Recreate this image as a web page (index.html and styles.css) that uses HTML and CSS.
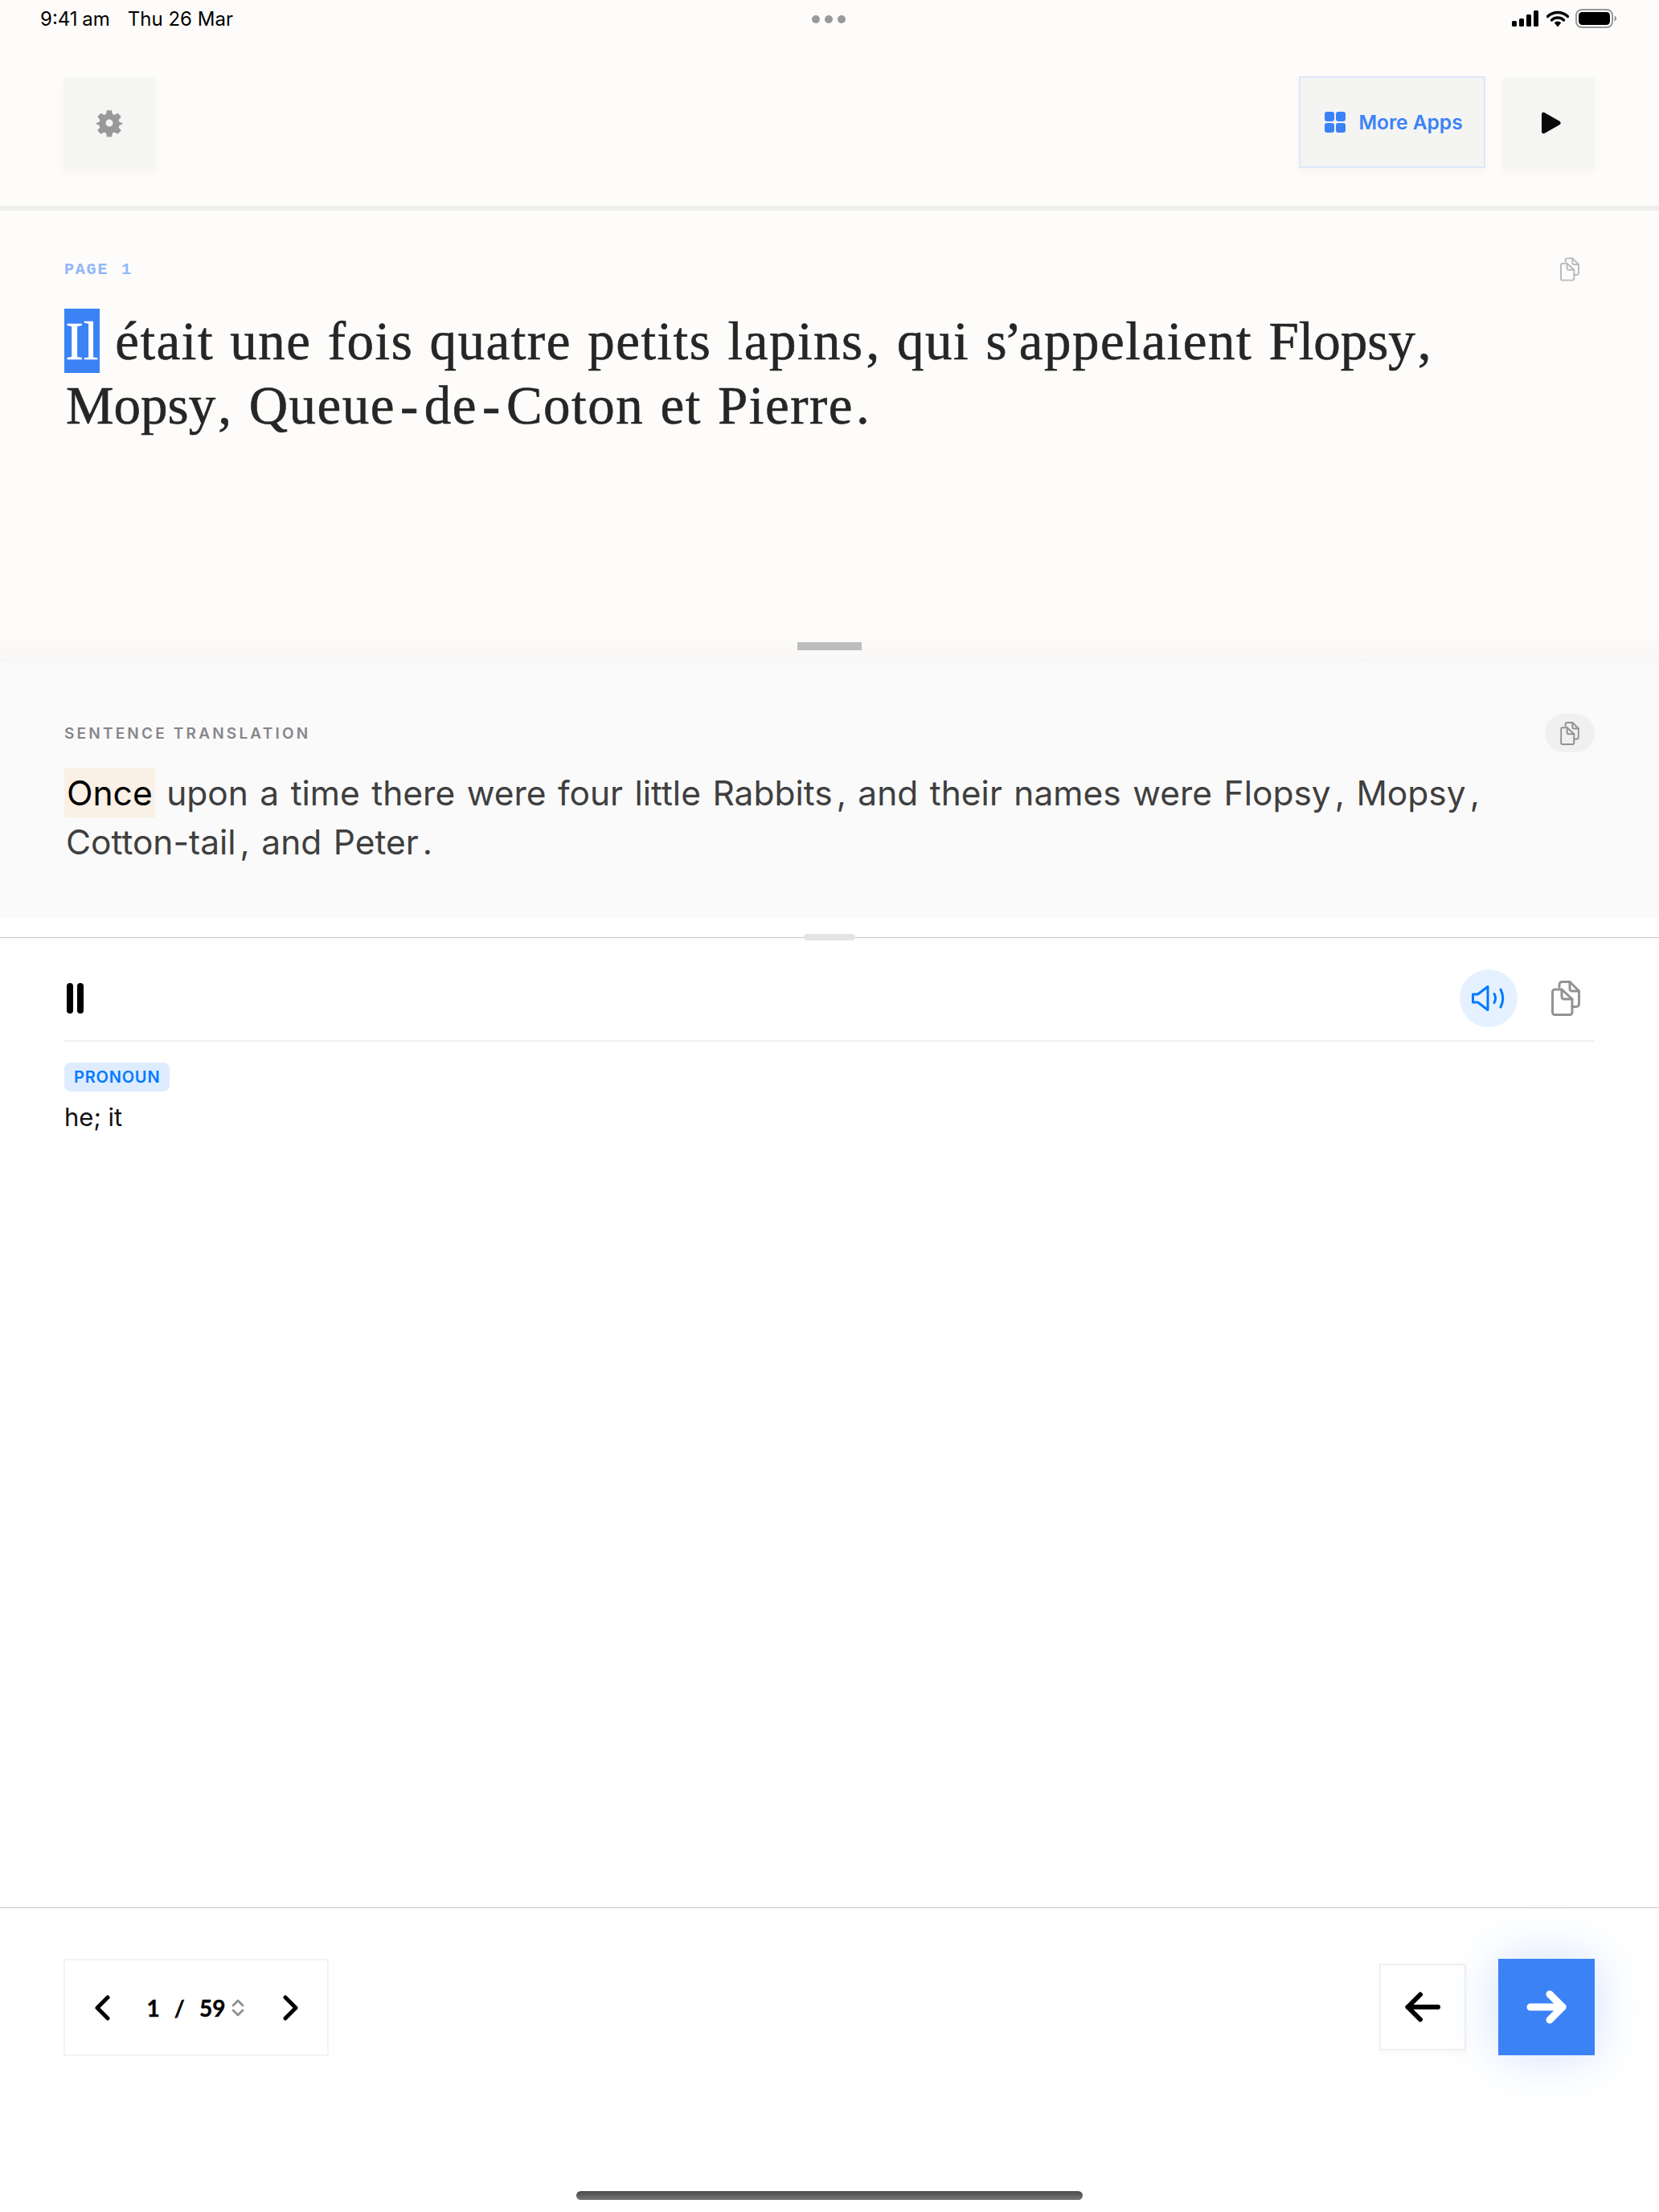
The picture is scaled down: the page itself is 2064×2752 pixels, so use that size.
FILE: index.html
```html
<!DOCTYPE html>
<html lang="fr">
<head>
<meta charset="utf-8">
<title>Reader</title>
<link rel="stylesheet" href="styles.css">
</head>
<body>
<div class="app">
  <header class="top">
    <div class="status">
      <div class="status-left"><span class="clock">9:41 am</span><span>Thu 26 Mar</span></div>
      <div class="dots"><i></i><i></i><i></i></div>
      <div class="status-right">
        <svg width="36" height="20" viewBox="0 0 36 20"><rect x="1" y="13" width="6" height="7" rx="1.5"/><rect x="10" y="10" width="6" height="10" rx="1.5"/><rect x="19" y="5" width="6" height="15" rx="1.5"/><rect x="28" y="0" width="6" height="20" rx="1.5"/></svg>
        <svg width="28" height="21" viewBox="0 0 28 21"><path d="M1.500 7.500a18 18 0 0 1 25 0" fill="none" stroke="#000" stroke-width="3.400" stroke-linecap="round"/><path d="M6.500 12a11 11 0 0 1 15 0" fill="none" stroke="#000" stroke-width="3.400" stroke-linecap="round"/><path d="M9.700 15.200a6 6 0 0 1 8.600 0L14 20.500z"/></svg>
        <svg width="52" height="24" viewBox="0 0 52 24"><rect x="1" y="1" width="45" height="22" rx="7" fill="none" stroke="#999" stroke-width="2"/><rect x="4" y="4" width="39" height="16" rx="4.500"/><path d="M48.500 8.500c2 .8 2.600 2.100 2.600 3.500s-.6 2.700-2.600 3.500z" fill="#999"/></svg>
      </div>
    </div>
    <div class="toolbar">
      <button class="tool" type="button">
        <svg width="36" height="36" viewBox="0 0 24 24"><path fill="#999" fill-rule="evenodd" d="M10 1.500h4l.7 3.200 1.500.7 2.900-1.600 2.700 3.100-2 2.500.4 1.600 3 1.300v.4l-3 1.400-.4 1.500 2 2.600-2.700 3-2.900-1.600-1.500.7-.7 3.200h-4l-.7-3.200-1.500-.7-2.900 1.600-2.700-3 2-2.600-.4-1.500-3-1.400v-.4l3-1.300.4-1.600-2-2.500 2.700-3.100 2.900 1.600 1.500-.7zM12 9a3 3 0 1 0 0 6 3 3 0 0 0 0-6z"/></svg>
      </button>
      <div class="tool-group">
        <button class="tool more" type="button">
          <svg width="26" height="26" viewBox="0 0 26 26" fill="#3b82f6"><rect width="12" height="12" rx="3"/><rect x="14" width="12" height="12" rx="3"/><rect y="14" width="12" height="12" rx="3"/><rect x="14" y="14" width="12" height="12" rx="3"/></svg>
          <span>More Apps</span>
        </button>
        <button class="tool" type="button">
          <svg class="play" width="26" height="28" viewBox="0 0 26 28"><path d="M1 3.200C1 1 3 .2 4.800 1.300l18.500 10.500c1.800 1 1.800 3.400 0 4.400L4.800 26.700C3 27.800 1 27 1 24.800z" fill="#0a0a0a"/></svg>
        </button>
      </div>
    </div>
  </header>

  <section class="page">
    <div class="section-head">
      <span class="page-label">PAGE 1</span>
      <svg class="copy-page" width="24" height="30" viewBox="0 0 36 44"><use href="#copy-icon"/></svg>
    </div>
    <p class="page-text"><mark class="word-on">Il</mark> était une fois quatre petits lapins<span class="punct">,</span> qui s<span class="apos">’</span>appelaient <span class="tight">Flopsy</span><span class="punct">,</span> <span class="tight">Mopsy</span><span class="punct">,</span> Queue<span class="hyph">-</span>de<span class="hyph">-</span>Coton et Pierre<span class="punct">.</span></p>
    <div class="handle-bar"></div>
  </section>

  <section class="translation">
    <div class="section-head trans-head">
      <span class="trans-label">SENTENCE TRANSLATION</span>
      <span class="copy-pill"><svg width="24" height="29" viewBox="0 0 36 44"><use href="#copy-icon"/></svg></span>
    </div>
    <p class="trans-text"><mark class="word-soft">Once</mark> upon a time there were four little Rabbits<span class="punct-s">,</span> and their names were Flopsy<span class="punct-s">,</span> Mopsy<span class="punct-s">,</span> Cotton-tail<span class="punct-s">,</span> and Peter<span class="punct-s">.</span></p>
  </section>

  <div class="spacer"></div>

  <section class="panel">
    <div class="handle-pill"></div>
    <div class="panel-head">
      <svg width="21" height="38" viewBox="0 0 21 38"><rect x="0" width="8" height="38" rx="4"/><rect x="13" width="8" height="38" rx="4"/></svg>
      <div class="panel-actions">
        <span class="speaker">
          <svg width="42" height="32" viewBox="0 0 42 32" fill="none" stroke="#007aff" stroke-width="3" stroke-linecap="round" stroke-linejoin="round"><path d="M1.500 11h6L20 1.500v29L7.500 21h-6z"/><path d="M28 10.500c2 3.500 2 7.500 0 11"/><path d="M36 5c3.500 7 3.500 15 0 22"/></svg>
        </span>
        <svg class="copy-big" width="36" height="44" viewBox="0 0 36 44"><use href="#copy-icon"/></svg>
      </div>
    </div>
    <span class="badge">PRONOUN</span>
    <p class="meaning">he; it</p>
  </section>

  <footer class="footer">
    <div class="pager">
      <svg class="chev" width="20" height="32" viewBox="0 0 20 32" fill="none" stroke="#000" stroke-width="5" stroke-linecap="round" stroke-linejoin="round"><path d="M17 3 4 16l13 13"/></svg>
      <div class="pager-num"><span>1</span><span class="slash">/</span><span>59</span>
        <svg width="16" height="22" viewBox="0 0 16 22" fill="none" stroke="#8e8e8e" stroke-width="2.800" stroke-linecap="round" stroke-linejoin="round"><path d="M2 8l6-6 6 6"/><path d="M2 14l6 6 6-6"/></svg>
      </div>
      <svg width="20" height="32" viewBox="0 0 20 32" fill="none" stroke="#000" stroke-width="5" stroke-linecap="round" stroke-linejoin="round"><path d="M3 3l13 13L3 29"/></svg>
    </div>
    <div class="nav">
      <button class="nav-btn back" type="button">
        <svg width="44" height="38" viewBox="0 0 44 38" fill="none" stroke="#000" stroke-width="6" stroke-linecap="round" stroke-linejoin="round"><path d="M19 3.500 3.500 19 19 34.500"/><path d="M3.500 19H41"/></svg>
      </button>
      <button class="nav-btn next" type="button">
        <svg width="50" height="42" viewBox="0 0 50 42" fill="none" stroke="#fff" stroke-width="9" stroke-linecap="round" stroke-linejoin="round"><path d="M5 21h40"/><path d="M29 5l16 16-16 16"/></svg>
      </button>
    </div>
  </footer>
  <div class="home-bar"></div>
</div>
<svg class="defs" width="0" height="0">
  <defs>
    <symbol id="copy-icon" viewBox="0 0 36 44">
      <g fill="none" stroke="#929296" stroke-width="3" stroke-linejoin="round" stroke-linecap="round">
        <path d="M10 8V5a3.500 3.500 0 0 1 3.500-3.500H23L34.500 13v16a3.500 3.500 0 0 1-3.500 3.500h-5"/>
        <path d="M23 1.500V10a3 3 0 0 0 3 3h8.500"/>
        <path d="M4.500 11H13l13 12v16.500a3 3 0 0 1-3 3H4.500a3 3 0 0 1-3-3V14a3 3 0 0 1 3-3z"/>
        <path d="M13 11v9a3 3 0 0 0 3 3h10"/>
      </g>
    </symbol>
  </defs>
</svg>
</body>
</html>
```

FILE: styles.css
```css
* { box-sizing: border-box; }
html, body { margin: 0; padding: 0; background: #fff; }
p { margin: 0; }
button { border: 0; padding: 0; font: inherit; }
mark { color: inherit; background: none; }
.defs { position: absolute; }

.app {
  width: 2064px;
  height: 2752px;
  display: flex;
  flex-direction: column;
  position: relative;
  overflow: hidden;
  font-family: Inter, "Liberation Sans", sans-serif;
}

.top {
  height: 262px;
  background: #fdfcfa;
  border-bottom: 6px solid #eeeeec;
  flex: none;
}
.status {
  height: 46px;
  padding: 0 52px 0 50px;
  display: grid;
  grid-template-columns: 1fr auto 1fr;
  align-items: center;
  color: #000;
  font-size: 24px;
}
.status-left { display: flex; gap: 22px; }
.clock { word-spacing: -1px; }
.dots { display: flex; gap: 6px; margin-top: 2px; }
.dots i { width: 10px; height: 10px; border-radius: 50%; background: #999; }
.status-right { display: flex; align-items: center; justify-content: flex-end; gap: 8px; }
.toolbar {
  height: 114px;
  margin-top: 50px;
  padding: 0 80px 0 79px;
  display: flex;
  justify-content: space-between;
}
.tool-group { display: flex; gap: 22px; }
.tool {
  width: 114px;
  height: 114px;
  background: #f5f5f4;
  box-shadow: 0 4px 10px rgba(0,0,0,.03);
  display: flex;
  align-items: center;
  justify-content: center;
}
.tool.more {
  width: 232px;
  gap: 16px;
  margin-top: -1px;
  padding-left: 4px;
  background: #f4f4f3;
  border: 2px solid #dde7f8;
  color: #3b82f6;
  font-size: 24.500px;
  font-weight: 600;
}
.play { margin-left: 6px; }

.section-head { display: flex; justify-content: space-between; align-items: center; }

.page {
  height: 562px;
  flex: none;
  padding: 58px 80px 0;
  position: relative;
  background: linear-gradient(#fdfcfa 0, #fdfcfa 518px, #f8f7f5 562px);
}
.page-label {
  font-family: "Liberation Mono", monospace;
  font-size: 20px;
  font-weight: 700;
  letter-spacing: 1.800px;
  color: #8fb6fb;
  word-spacing: 2px;
}
.copy-page { margin-right: 19px; opacity: .6; }
.page-text {
  margin-top: 34px;
  padding-left: 2px;
  width: 1800px;
  font-family: "Liberation Serif", serif;
  font-size: 67px;
  line-height: 80px;
  color: #262626;
  letter-spacing: 1.500px;
  word-spacing: 2px;
  -webkit-text-stroke: .6px #262626;
}
.word-on {
  display: inline-block;
  margin: 0 -1px 0 -2px;
  background: #3b82f6;
  color: #fff;
  -webkit-text-stroke: .6px #fff;
  padding: 0 1.500px;
  letter-spacing: 0;
}
.tight { letter-spacing: 0; }
.apos { margin: 0 -5px; }
.punct { margin-left: 3px; }
.hyph { margin: 0 6px; }
.handle-bar {
  position: absolute;
  left: 992px;
  top: 537px;
  width: 80px;
  height: 10px;
  background: #bdbdbd;
}

.translation {
  height: 318px;
  flex: none;
  background: #fafafa;
  padding: 64px 80px 0;
}
.trans-head { height: 48px; }
.trans-label {
  font-size: 19px;
  font-weight: 600;
  letter-spacing: 3.200px;
  color: #86868b;
}
.copy-pill {
  width: 62px;
  height: 48px;
  border-radius: 24px;
  background: #f0f0f0;
  display: flex;
  align-items: center;
  justify-content: center;
}
.trans-text {
  margin-top: 20px;
  padding-left: 2px;
  width: 1860px;
  font-size: 42.500px;
  line-height: 61px;
  color: #3f3f3f;
  word-spacing: 2.500px;
}
.word-soft {
  display: inline-block;
  margin-left: -2px;
  background: #faf0e6;
  color: #000;
  padding: 0 3px;
}
.punct-s { margin-left: 5px; }

.spacer { height: 24px; flex: none; }

.panel {
  flex: 1;
  position: relative;
  border-top: 1px solid #c6c6c6;
  padding: 39px 80px 0;
}
.handle-pill {
  position: absolute;
  left: 1000px;
  top: -5px;
  width: 64px;
  height: 8px;
  border-radius: 4px;
  background: #e4e4e4;
}
.panel-head {
  height: 90px;
  padding: 0 18px 16px 3px;
  display: flex;
  justify-content: space-between;
  align-items: center;
  border-bottom: 2px solid #f0f0f2;
}
.panel-actions { display: flex; align-items: center; gap: 42px; }
.speaker {
  width: 72px;
  height: 72px;
  border-radius: 50%;
  background: #e5f1ff;
  display: flex;
  align-items: center;
  justify-content: center;
}
.copy-big { display: block; }
.badge {
  display: inline-block;
  margin-top: 26px;
  padding: 0 12px;
  height: 36px;
  line-height: 36px;
  border-radius: 8px;
  background: #deecff;
  color: #007aff;
  font-size: 20px;
  font-weight: 600;
  letter-spacing: .8px;
}
.meaning {
  margin-top: 10px;
  font-size: 31px;
  line-height: 44px;
  color: #111;
}

.footer {
  height: 379px;
  flex: none;
  border-top: 1px solid #c8c8c8;
  padding: 63px 80px 0 79px;
  display: flex;
  justify-content: space-between;
  align-items: flex-start;
}
.pager {
  width: 330px;
  height: 121px;
  border: 2px solid #f3f3f3;
  padding: 0 35px 0 35px;
  display: flex;
  align-items: center;
  justify-content: space-between;
}
.chev { margin-left: 1px; }
.pager-num {
  display: flex;
  align-items: center;
  gap: 8px;
  margin-left: -2px;
  font-family: Lato, sans-serif;
  font-size: 28px;
  font-weight: 700;
  color: #000;
  -webkit-text-stroke: .4px #000;
}
.slash { margin: 0 10px; }
.nav { display: flex; align-items: center; gap: 40px; }
.nav-btn { display: flex; align-items: center; justify-content: center; }
.back {
  width: 108px;
  height: 108px;
  background: #fff;
  border: 2px solid #efefef;
  box-shadow: 0 4px 10px rgba(0,0,0,.03);
}
.next {
  width: 120px;
  height: 120px;
  background: #3b82f6;
  box-shadow: 0 0 60px rgba(59,130,246,.24);
}
.home-bar {
  position: absolute;
  left: 717px;
  top: 2726px;
  width: 630px;
  height: 11px;
  border-radius: 6px;
  background: linear-gradient(#4a4a4a, #777);
}
```
